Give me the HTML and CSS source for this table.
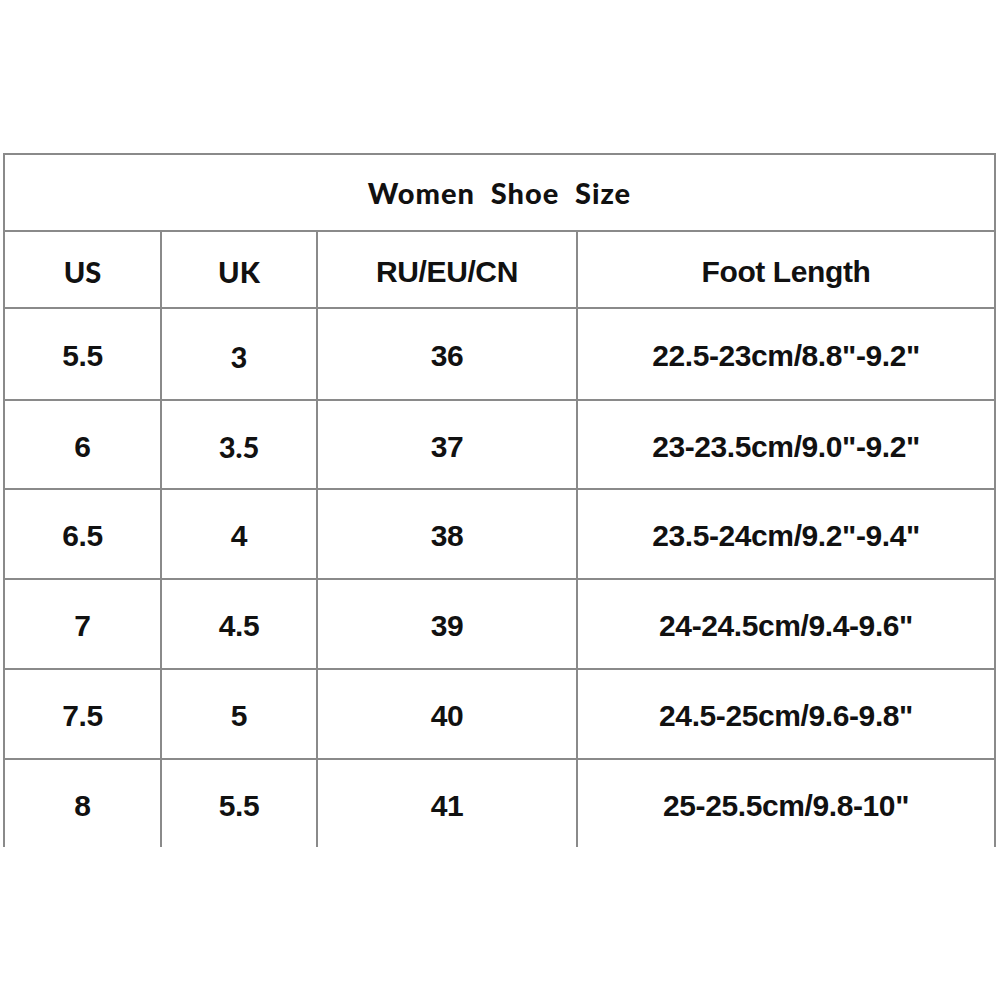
FILE: index.html
```html
<!DOCTYPE html>
<html>
<head>
<meta charset="utf-8">
<link rel="stylesheet" href="styles.css">
</head>
<body>
<table class="size-table">
  <colgroup>
    <col class="c-us"><col class="c-uk"><col class="c-eu"><col class="c-len">
  </colgroup>
  <tr class="r-title"><td colspan="4" class="calibri title">Women&nbsp; Shoe&nbsp; Size</td></tr>
  <tr class="r-head">
    <td class="calibri">US</td>
    <td class="calibri">UK</td>
    <td>RU/EU/CN</td>
    <td>Foot Length</td>
  </tr>
  <tr class="r-a"><td>5.5</td><td class="calibri">3</td><td>36</td><td>22.5-23cm/8.8"-9.2"</td></tr>
  <tr class="r-b"><td>6</td><td class="calibri">3.5</td><td>37</td><td>23-23.5cm/9.0"-9.2"</td></tr>
  <tr class="r-c"><td>6.5</td><td>4</td><td>38</td><td>23.5-24cm/9.2"-9.4"</td></tr>
  <tr class="r-c"><td>7</td><td>4.5</td><td>39</td><td>24-24.5cm/9.4-9.6"</td></tr>
  <tr class="r-c"><td>7.5</td><td>5</td><td>40</td><td>24.5-25cm/9.6-9.8"</td></tr>
  <tr class="r-last"><td>8</td><td>5.5</td><td>41</td><td>25-25.5cm/9.8-10"</td></tr>
</table>
</body>
</html>
```
FILE: styles.css
```css
html, body {
  margin: 0;
  padding: 0;
  background: #ffffff;
}
body {
  padding-top: 153px;
  padding-left: 3px;
}
.size-table {
  border-collapse: collapse;
  table-layout: fixed;
  width: 991px;
  font-family: "Liberation Sans", Arial, sans-serif;
  font-weight: bold;
  font-size: 30px;
  color: #111;
  letter-spacing: -0.4px;
}
.c-us { width: 157px; }
.c-uk { width: 156px; }
.c-eu { width: 260px; }
.c-len { width: 418px; }
.size-table td {
  border: 2px solid #8a8a8a;
  text-align: center;
  vertical-align: middle;
  padding: 4px 0 0 0;
  line-height: 1;
}
.size-table .calibri {
  font-family: Lato, "Open Sans", sans-serif;
  font-weight: 900;
  font-size: 29px;
  letter-spacing: 0;
}
.size-table .title {
  padding-top: 0;
  word-spacing: 0;
  letter-spacing: 1px;
}
.r-title { height: 77px; }
.r-head { height: 77px; }
.r-a { height: 92px; }
.r-b { height: 89px; }
.r-c { height: 90px; }
.r-last { height: 88px; }
.r-last td { border-bottom: none; }
```
